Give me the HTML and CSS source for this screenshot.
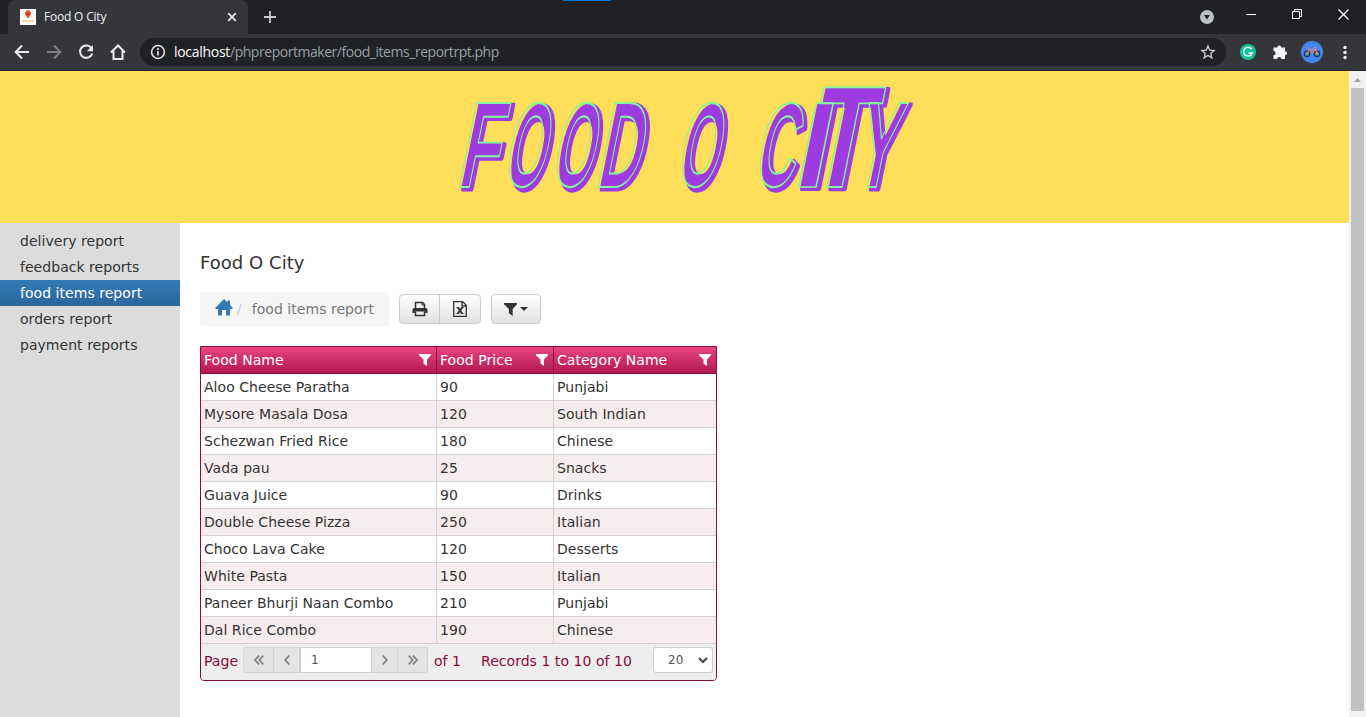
FILE: index.html
```
<!DOCTYPE html>
<html lang="en">
<head>
<meta charset="utf-8">
<title>Food O City</title>
<link rel="stylesheet" href="styles.css">
</head>
<body>
<svg width="0" height="0" class="defs">
  <defs>
    <symbol id="funnel" viewBox="0 0 12 12"><path d="M0 0h12v1.200L8 5.500V12L4.500 9.500v-4L0 1.200z"/></symbol>
    <g id="wordmark">
      <text transform="translate(455 115.700) skewX(-11.5) scale(.676 1.22)">F</text>
      <text transform="translate(501.400 115) skewX(-11.5) scale(.525 1.19)">O</text>
      <text transform="translate(549.400 115) skewX(-11.5) scale(.525 1.19)">O</text>
      <text transform="translate(594 115.700) skewX(-11.5) scale(.6 1.22)">D</text>
      <text transform="translate(674.400 115) skewX(-11.5) scale(.525 1.19)">O</text>
      <text transform="translate(752 115) skewX(-11.5) scale(.565 1.19)">C</text>
      <text transform="translate(791 115.700) skewX(-11.5) scale(1.19 1.22)">I</text>
      <text transform="translate(802.400 115.700) skewX(-11.5) scale(1.05 1.45)">T</text>
      <text transform="translate(851 115.700) skewX(-11.5) scale(.62 1.22)">Y</text>
    </g>
  </defs>
</svg>

<header class="browser">
  <div class="tabstrip">
    <div class="tab">
      <svg class="favicon" width="16" height="16"><rect width="16" height="16" fill="#fff"/><path d="M8 1l2 1 1.300 2-1 2.500L8 9.500 5.700 6.500l-1-2.500L6 2z" fill="#e4572a"/><path d="M6 4h4v2H6z" fill="#c8271c" opacity=".6"/><path d="M2 12h12" stroke="#ffcb85" stroke-width="1.500"/></svg>
      <span class="tab-title">Food O City</span>
      <svg width="10" height="10" class="tab-close"><path d="M1.200 1.200l7.600 7.600M8.800 1.200L1.200 8.800" stroke="#e8eaed" stroke-width="1.700"/></svg>
    </div>
    <svg class="new-tab" width="12" height="12"><path d="M6 0v12M0 6h12" stroke="#c8cacd" stroke-width="1.800"/></svg>
    <div class="accent"></div>
    <div class="window-buttons">
      <svg width="14" height="14"><circle cx="7" cy="7" r="7" fill="#bdc1c6"/><path d="M4 5h6l-3 4.600z" fill="#202124"/></svg>
      <svg width="10" height="14"><path d="M0 6.500h10" stroke="#fff"/></svg>
      <svg width="11" height="14"><path d="M.5 3.500h7v7h-7zM2.500 3V1.500h7v7H8" fill="none" stroke="#fff"/></svg>
      <svg width="11" height="14"><path d="M.5 1.500l10 10M10.500 1.500l-10 10" stroke="#fff" stroke-width="1.200"/></svg>
    </div>
  </div>
  <div class="toolbar">
    <div class="nav">
      <svg width="16" height="16"><path d="M15 8H2M8 1.500L1.700 8 8 14.500" fill="none" stroke="#e8eaed" stroke-width="2"/></svg>
      <svg width="16" height="16"><path d="M1 8h13M8 1.500L14.300 8 8 14.500" fill="none" stroke="#7d7f82" stroke-width="2"/></svg>
      <svg width="16" height="16"><path d="M13.300 4A6.200 6.200 0 1 0 14.200 9.500" fill="none" stroke="#e8eaed" stroke-width="2"/><path d="M15 1v6.200H8.800z" fill="#e8eaed"/></svg>
      <svg width="16" height="16"><path d="M1 8.500L8 1.500l7 7M3.500 7v8h9V7" fill="none" stroke="#e8eaed" stroke-width="2"/></svg>
    </div>
    <div class="omnibox">
      <svg width="16" height="16"><circle cx="8" cy="8" r="6.400" fill="none" stroke="#e8eaed" stroke-width="1.500"/><path d="M8 7v4.500M8 4v2" stroke="#e8eaed" stroke-width="1.600"/></svg>
      <span class="url"><b>localhost</b>/phpreportmaker/food_items_reportrpt.php</span>
      <svg class="star" width="16" height="16"><path d="M8 2l1.700 4.100 4.400.4-3.300 2.900 1 4.400L8 11.500l-3.800 2.300 1-4.400-3.300-2.900 4.400-.4z" fill="none" stroke="#d0d2d5" stroke-width="1.300"/></svg>
    </div>
    <div class="extensions">
      <svg width="16" height="16"><circle cx="8" cy="8" r="8" fill="#15c39a"/><path d="M11.500 5A4.400 4.400 0 1 0 12.200 9H8.500" fill="none" stroke="#fff" stroke-width="1.400"/></svg>
      <svg width="16" height="16"><path d="M1.500 3.500h3.700a2 2 0 1 1 4 0H13v3.700a2 2 0 1 1 0 4V15H9.300a2.100 2.100 0 0 0-4.200 0H1.500v-3.700a2.100 2.100 0 0 0 0-4.200z" fill="#f1f3f4"/></svg>
      <svg width="22" height="22"><circle cx="11" cy="11" r="11" fill="#4285f4"/><g fill="#5b9bd0" stroke="#263238" stroke-width="1.300"><circle cx="6" cy="12.800" r="2.700"/><circle cx="16" cy="12.800" r="2.700"/></g><path d="M6 12.500l2.500-4 2.500 4 3.500-4.500 1.500 4.500M8.500 8.500H14M13 6.500h2.500M5 7h3" fill="none" stroke="#f08070" stroke-width="1.100"/></svg>
      <svg width="4" height="16"><g fill="#f1f3f4"><circle cx="2" cy="3.500" r="1.700"/><circle cx="2" cy="8.500" r="1.700"/><circle cx="2" cy="13.500" r="1.700"/></g></svg>
    </div>
  </div>
</header>

<div class="viewport">
  <div class="page">
    <div class="banner">
      <svg width="1349" height="152" class="logo" role="img" aria-label="Food O City">
        <g class="logo-fill" transform="translate(3 2.500)"><use href="#wordmark"/></g>
        <g class="logo-line"><use href="#wordmark"/></g>
      </svg>
    </div>
    <div class="columns">
      <nav class="sidebar">
        <a>delivery report</a><a>feedback reports</a><a class="active">food items report</a><a>orders report</a><a>payment reports</a>
      </nav>
      <main class="content">
        <h1>Food O City</h1>
        <div class="tools">
          <div class="breadcrumb">
            <svg width="18" height="17"><path d="M9 0l3.500 3.300V1.500H15v4.200l2.500 3V10H15v6.500h-4V11H7v5.500H3V10H.5V8.700z" fill="#337ab7"/></svg>
            <i>/</i><span>food items report</span>
          </div>
          <div class="btn-group">
            <button><svg width="16" height="16"><path d="M3.500 8V1.500h7l2 2V8M3.500 11v3.500h9V11" fill="#f2f2f2" stroke="#333" stroke-width="1.500"/><path d="M10 1v3h3" fill="none" stroke="#333"/><path d="M2 7h12q1.500 0 1.500 1.500V12h-3v-1.500h-9V12h-3V8.500Q.5 7 2 7z" fill="#333"/></svg></button>
            <button><svg width="16" height="16"><path d="M1.700.7h9l3.600 3.600v11H1.700zM10 1v4h4" fill="none" stroke="#333" stroke-width="1.300"/><path d="M4.500 6.500h2.800M8.800 6.500h2.700M4.500 12.500h2.800M8.800 12.500h2.700" stroke="#333" stroke-width="1.200"/><path d="M5.700 6.500l4.500 6M10.300 6.500l-4.600 6" stroke="#333" stroke-width="1.900"/></svg></button>
          </div>
          <button class="filter-btn"><svg width="13" height="13"><use href="#funnel"/></svg><svg width="8" height="4"><path d="M0 0h8L4 4z"/></svg></button>
        </div>
        <div class="grid">
          <table>
            <colgroup><col class="c1"><col class="c2"><col class="c3"></colgroup>
            <thead><tr>
              <th>Food Name<svg width="12" height="12"><use href="#funnel"/></svg></th>
              <th>Food Price<svg width="12" height="12"><use href="#funnel"/></svg></th>
              <th>Category Name<svg width="12" height="12"><use href="#funnel"/></svg></th>
            </tr></thead>
            <tbody>
              <tr><td>Aloo Cheese Paratha</td><td>90</td><td>Punjabi</td></tr>
              <tr><td>Mysore Masala Dosa</td><td>120</td><td>South Indian</td></tr>
              <tr><td>Schezwan Fried Rice</td><td>180</td><td>Chinese</td></tr>
              <tr><td>Vada pau</td><td>25</td><td>Snacks</td></tr>
              <tr><td>Guava Juice</td><td>90</td><td>Drinks</td></tr>
              <tr><td>Double Cheese Pizza</td><td>250</td><td>Italian</td></tr>
              <tr><td>Choco Lava Cake</td><td>120</td><td>Desserts</td></tr>
              <tr><td>White Pasta</td><td>150</td><td>Italian</td></tr>
              <tr><td>Paneer Bhurji Naan Combo</td><td>210</td><td>Punjabi</td></tr>
              <tr><td>Dal Rice Combo</td><td>190</td><td>Chinese</td></tr>
            </tbody>
          </table>
          <div class="pager">
            <span class="page-label">Page</span>
            <div class="page-nav">
              <span class="first"><svg width="10" height="10"><path d="M5 .7L1 5l4 4.300M9.300.7L5.300 5l4 4.300"/></svg></span>
              <span class="prev"><svg width="6" height="10"><path d="M5.200.7L1.200 5l4 4.300"/></svg></span>
              <span class="page-input">1</span>
              <span class="next"><svg width="6" height="10"><path d="M.8.7l4 4.300-4 4.300"/></svg></span>
              <span class="last"><svg width="10" height="10"><path d="M.7.7l4 4.300-4 4.300M5 .7L9 5 5 9.300"/></svg></span>
            </div>
            <span class="of">of 1</span>
            <span class="records">Records 1 to 10 of 10</span>
            <div class="page-size">20<svg width="10" height="7"><path d="M1 1l4 4 4-4" fill="none" stroke="#444" stroke-width="2"/></svg></div>
          </div>
        </div>
      </main>
    </div>
  </div>
  <div class="scrollbar">
    <svg width="17" height="17"><path d="M5 11l3.500-4L12 11z" fill="#a3a3a3"/></svg>
    <div class="thumb"></div>
  </div>
</div>
</body>
</html>
```
FILE: styles.css
```
* { box-sizing: border-box; }
body { margin: 0; height: 717px; overflow: hidden; display: flex; flex-direction: column; background: #fff; color: #333; font: 14px/20px Verdana, "DejaVu Sans", sans-serif; letter-spacing: .04px; }
svg { display: block; flex: none; }
.defs { position: absolute; }

.browser { height: 71px; flex: none; background: #202124; font-family: "Open Sans", sans-serif; }
.tabstrip { height: 34px; display: flex; align-items: flex-start; padding-left: 8px; }
.tab { width: 240px; height: 34px; display: flex; align-items: center; padding: 0 11px 0 12px; background: #35363a; border-radius: 8px 8px 0 0; }
.tab-title { flex: 1; margin-left: 8px; color: #f1f3f4; font-size: 12px; letter-spacing: -.2px; }
.new-tab { margin: 11px 0 0 16px; }
.accent { width: 48px; height: 1px; margin-left: 287px; background: #0078d7; }
.window-buttons { display: flex; margin: 10px 17px 0 auto; }
.window-buttons svg:nth-child(n+2) { margin-left: 32px; margin-top: -2px; }
.window-buttons svg:nth-child(n+3) { margin-left: 36px; }
.window-buttons svg:nth-child(4) { margin-left: 35px; }
.toolbar { height: 37px; display: flex; align-items: center; padding: 0 19px 1px 14px; background: #35363a; border-bottom: 1px solid #29292b; }
.nav { display: flex; gap: 16px; }
.omnibox { width: 1086px; height: 28px; flex: none; margin-left: 14px; display: flex; align-items: center; padding: 0 10px; border-radius: 14px; background: #202124; }
.url { margin-left: 8px; font-size: 14px; letter-spacing: -.46px; color: #9aa0a6; }
.url b { font-weight: 400; color: #fff; letter-spacing: -.3px; }
.star { margin-left: auto; }
.extensions { display: flex; align-items: center; margin-left: 14px; }
.extensions svg:nth-child(2) { margin-left: 16px; }
.extensions svg:nth-child(3) { margin-left: 13px; }
.extensions svg:nth-child(4) { margin-left: 20px; }

.viewport { flex: 1; display: flex; min-height: 0; }
.page { width: 1349px; display: flex; flex-direction: column; }
.scrollbar { width: 17px; background: #f1f1f1; }
.thumb { width: 13px; height: 623px; margin-left: 2px; background: #c1c1c1; }
.banner { height: 152px; flex: none; background: #ffde59; }
#wordmark text { font: 700 100px "Liberation Sans", Arial, sans-serif; letter-spacing: 0; vector-effect: non-scaling-stroke; }
.logo-fill { fill: #9d3be0; stroke: #9d3be0; stroke-width: 4px; stroke-linejoin: round; }
.logo-line { fill: none; stroke: #83f59b; stroke-width: 1.6px; stroke-linejoin: round; }

.columns { flex: 1; display: flex; min-height: 0; }
.sidebar { width: 180px; padding-top: 5px; background: #dcdcdc; }
.sidebar a { display: block; height: 26px; line-height: 26px; padding-left: 20px; }
.sidebar .active { color: #fff; background: linear-gradient(#337ab7, #2b669a); }
.content { flex: 1; padding: 30px 20px 0; }
h1 { margin: 0; font-size: 18px; line-height: 20px; font-weight: 400; }
.tools { height: 34px; display: flex; align-items: center; margin-top: 19px; }
.breadcrumb { width: 189px; height: 34px; display: flex; align-items: center; padding-left: 15px; border-radius: 4px; background: #f5f5f5; color: #777; }
.breadcrumb svg { margin-top: -3px; }
.breadcrumb i { font-style: normal; color: #ccc; margin: 0 10px 0 4px; }
button { margin: 0; padding: 0; height: 30px; display: flex; align-items: center; justify-content: center; border: 1px solid #ccc; border-radius: 4px; background: linear-gradient(#fff, #e0e0e0); fill: #333; }
.btn-group { display: flex; margin: 0 10px; }
.btn-group button { width: 41px; border-radius: 4px 0 0 4px; }
.btn-group button + button { width: 42px; margin-left: -1px; border-radius: 0 4px 4px 0; }
.filter-btn { width: 50px; gap: 3px; }

.grid { width: 517px; height: 335px; margin-top: 20px; border: 1px solid #8b0a3d; border-radius: 0 0 4px 4px; overflow: hidden; }
table { width: 515px; table-layout: fixed; border-collapse: separate; border-spacing: 0; }
.c1 { width: 236px; } .c2 { width: 117px; } .c3 { width: 162px; }
th, td { height: 27px; padding: 0 3px; line-height: 20px; text-align: left; font-weight: 400; border-bottom: 1px solid #d3d3d3; border-right: 1px solid #d3d3d3; white-space: nowrap; }
th { color: #fff; fill: #fff; border-color: #8b0a3d; }
thead tr { background: linear-gradient(#e8457f, #b0174f); }
th svg { float: right; margin: 4px 2px 0 0; }
th:last-child, td:last-child { border-right: 0; }
tbody tr:nth-child(even) { background: #f8edee; }
.pager { height: 36px; display: flex; align-items: center; padding: 0 3px 2px; background: #eee; color: #8b0a3d; white-space: nowrap; }
.page-label { width: 39px; }
.page-nav { display: flex; width: 185px; height: 26px; margin-top: -2px; color: #555; font-size: 12px; }
.page-nav span { display: flex; align-items: center; justify-content: center; border: 1px solid #d4d4d4; background: #e4e4e4; }
.page-nav svg { fill: none; stroke: #808080; stroke-width: 1.7px; }
.page-nav .first { width: 31px; border-radius: 3px 0 0 3px; }
.page-nav .prev { width: 26px; border-left: 0; }
.page-nav .page-input { width: 72px; justify-content: flex-start; padding-left: 10px; background: #fff; border-color: #ccc; }
.page-nav .next { width: 26px; border-left: 0; }
.page-nav .last { width: 30px; border-left: 0; border-radius: 0 3px 3px 0; }
.of { width: 47px; margin-left: 6px; }
.page-size { width: 60px; height: 26px; margin: -2px 0 0 auto; display: flex; align-items: center; justify-content: space-between; padding: 0 4px 0 14px; border: 1px solid #ccc; border-radius: 3px; background: #fff; color: #555; font-size: 12px; }
```
